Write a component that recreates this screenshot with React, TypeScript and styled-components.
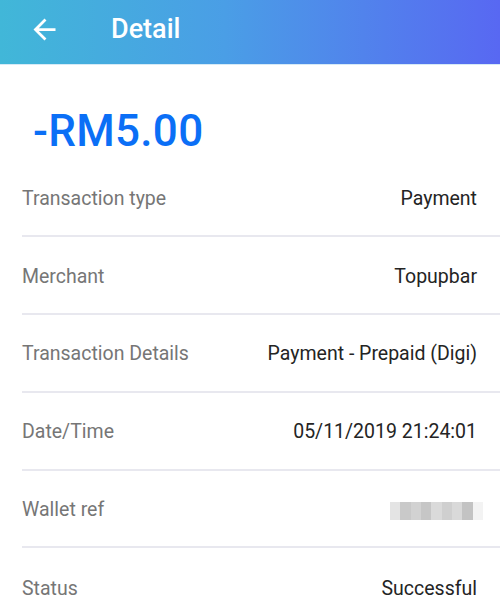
import React from "react";
import styled, { createGlobalStyle } from "styled-components";

const Global = createGlobalStyle`
  html, body { margin: 0; padding: 0; background: #ffffff; }
  body { font-family: Roboto, "Noto Sans", "Liberation Sans", sans-serif; }
  * { box-sizing: border-box; }
`;

const Page = styled.div`
  width: 500px;
  height: 606px;
  overflow: hidden;
  background: #ffffff;
  display: flex;
  flex-direction: column;
`;

const Header = styled.header`
  height: 65px;
  flex: none;
  display: flex;
  align-items: center;
  background: linear-gradient(90deg, #41b7d8 0%, #4a9ee6 45%, #5868f2 100%);
  border-bottom: 1px solid #d6eaf6;
  padding-left: 28px;
`;

const BackButton = styled.button`
  width: 33px;
  height: 33px;
  padding: 0;
  margin: -6px 0 0 0;
  border: 0;
  background: transparent;
  display: flex;
  align-items: center;
  justify-content: center;
  cursor: pointer;
`;

const Title = styled.h1`
  margin: -6px 0 0 50px;
  font-size: 27px;
  font-weight: 500;
  color: #ffffff;
  letter-spacing: 0;
`;

const AmountBlock = styled.div`
  height: 94.5px;
  flex: none;
  display: flex;
  align-items: flex-start;
  padding: 44px 0 0 33px;
`;

const Amount = styled.div`
  font-size: 44px;
  line-height: 1;
  font-weight: 500;
  letter-spacing: 0.3px;
  color: #0b6ff6;
`;

const List = styled.div`
  display: flex;
  flex-direction: column;
`;

const Row = styled.div<{ $last?: boolean }>`
  height: 77.8px;
  margin-left: 22px;
  padding-right: 23px;
  padding-top: 2px;
  display: flex;
  align-items: center;
  justify-content: space-between;
  border-bottom: ${(p) => (p.$last ? "none" : "2px solid #e8e8ef")};
  flex: none;
`;

const Label = styled.span`
  font-size: 19.5px;
  color: #767676;
`;

const Value = styled.span`
  font-size: 19.5px;
  color: #242424;
`;

const Blurred = styled.span`
  display: inline-flex;
  width: 93px;
  height: 18px;
  margin-top: 2px;
  margin-right: -6px;
`;

const Pix = styled.span<{ $c: string }>`
  flex: 1;
  background: ${(p) => p.$c};
`;

const rows: { label: string; value: string }[] = [
  { label: "Transaction type", value: "Payment" },
  { label: "Merchant", value: "Topupbar" },
  { label: "Transaction Details", value: "Payment - Prepaid (Digi)" },
  { label: "Date/Time", value: "05/11/2019 21:24:01" },
  { label: "Wallet ref", value: "" },
  { label: "Status", value: "Successful" },
];

const blurCols = ["#e4e4e4", "#c9c9c9", "#d2d2d2", "#c6c6c6", "#dadada", "#cfcfcf", "#d9d9d9", "#c3c3c3", "#f3f3f3"];

export default function App() {
  return (
    <Page>
      <Global />
      <Header>
        <BackButton aria-label="Back">
          <svg width="33" height="33" viewBox="0 0 24 24" fill="#ffffff">
            <path d="M20 11H7.83l5.59-5.59L12 4l-8 8 8 8 1.41-1.41L7.83 13H20v-2z" />
          </svg>
        </BackButton>
        <Title>Detail</Title>
      </Header>
      <AmountBlock>
        <Amount>-RM5.00</Amount>
      </AmountBlock>
      <List>
        {rows.map((r, i) => (
          <Row key={r.label} $last={i === rows.length - 1}>
            <Label>{r.label}</Label>
            {r.value ? (
              <Value>{r.value}</Value>
            ) : (
              <Blurred>
                {blurCols.map((c, j) => (
                  <Pix key={j} $c={c} />
                ))}
              </Blurred>
            )}
          </Row>
        ))}
      </List>
    </Page>
  );
}
